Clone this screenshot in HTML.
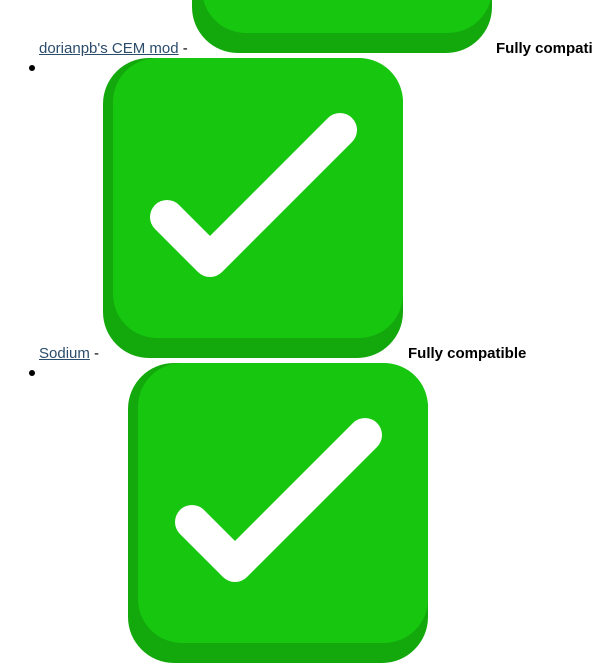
<html><head><style>
body{margin:0;width:592px;height:548px;overflow:hidden;position:relative;background:#fff;font-family:"Liberation Sans",sans-serif;font-size:15px;color:#000}
.a{position:absolute;white-space:nowrap;line-height:18px}
a{color:#2b4c6b;text-decoration:underline}
b{font-weight:bold}
.dot{position:absolute;width:6px;height:6px;border-radius:50%;background:#000}
svg{position:absolute}
</style></head><body>
<svg width="0" height="0" style="position:absolute"><defs>
<g id="ic">
<rect x="0" y="0" width="300" height="300" rx="46" fill="#13a90c"/>
<rect x="10" y="0" width="290" height="280" rx="44" fill="#16c60f"/>
<path d="M64 159 L107 202 L237 72" fill="none" stroke="#fff" stroke-width="34" stroke-linecap="round" stroke-linejoin="round"/>
</g></defs></svg>
<svg style="left:192px;top:-247px" width="300" height="300"><use href="#ic"/></svg>
<div class="a" style="left:39px;top:40px"><a>dorianpb's CEM mod</a> -</div>
<div class="a" style="left:496px;top:40px"><b>Fully compatible</b></div>
<div class="dot" style="left:29px;top:65px"></div>
<svg style="left:103px;top:58px" width="300" height="300"><use href="#ic"/></svg>
<div class="a" style="left:39px;top:345px"><a>Sodium</a> -</div>
<div class="a" style="left:408px;top:345px"><b>Fully compatible</b></div>
<div class="dot" style="left:29px;top:370px"></div>
<svg style="left:128px;top:363px" width="300" height="300"><use href="#ic"/></svg>
</body></html>
